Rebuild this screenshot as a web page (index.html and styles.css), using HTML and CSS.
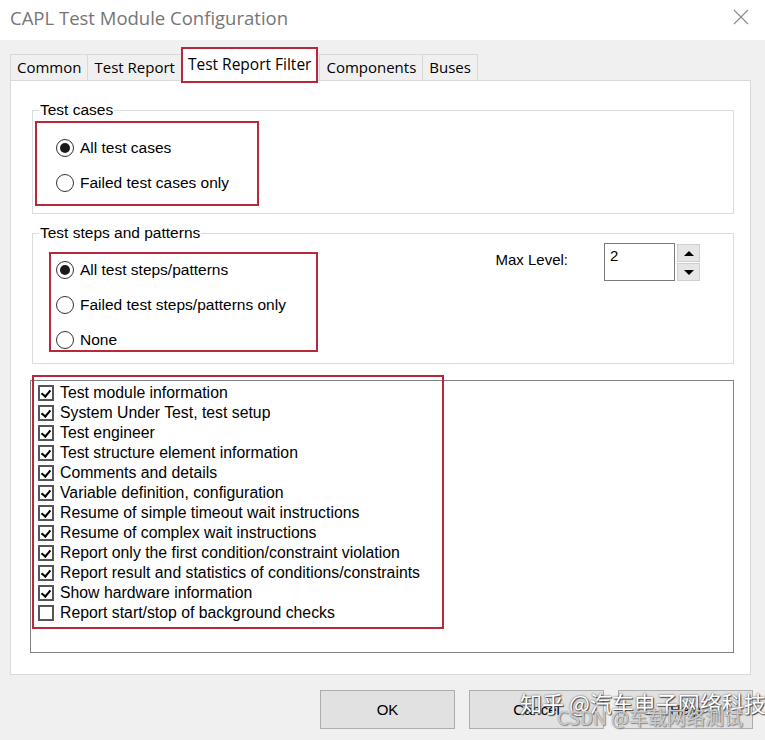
FILE: index.html
```html
<!DOCTYPE html>
<html lang="en">
  <head>
    <meta charset="UTF-8" />
    <title>CAPL Test Module Configuration</title>
    <link rel="stylesheet" href="styles.css">
  </head>
  <body>
    <div class="dialog">
      <div class="titlebar">
        <span class="title">CAPL Test Module Configuration</span>
        <svg class="close" width="16" height="16" viewBox="0 0 16 16">
          <path d="M1 1 L15 15 M15 1 L1 15" stroke="#8a8a8a" stroke-width="1.1" fill="none" />
        </svg>
      </div>

      <div class="client">
        <div class="tabs">
          <div class="tab">Common</div>
          <div class="tab">Test Report</div>
          <div class="tab active">Test Report Filter</div>
          <div class="tab">Components</div>
          <div class="tab">Buses</div>
        </div>

        <div class="panel">
          <fieldset class="group">
            <legend>Test cases</legend>
            <div class="mark mark-cases">
              <label class="radio"><span class="dot checked"></span>All test cases</label>
              <label class="radio"><span class="dot"></span>Failed test cases only</label>
            </div>
          </fieldset>

          <fieldset class="group group-steps">
            <legend>Test steps and patterns</legend>
            <div class="steps-row">
              <div class="mark mark-steps">
                <label class="radio"><span class="dot checked"></span>All test steps/patterns</label>
                <label class="radio"><span class="dot"></span>Failed test steps/patterns only</label>
                <label class="radio"><span class="dot"></span>None</label>
              </div>
              <div class="level">
                <span class="level-label">Max Level:</span>
                <div class="level-input">2</div>
                <div class="spin">
                  <div class="spin-btn"><span class="arrow up"></span></div>
                  <div class="spin-btn"><span class="arrow down"></span></div>
                </div>
              </div>
            </div>
          </fieldset>

          <div class="list-wrap">
            <div class="list">
              <div class="item"><span class="box on"></span>Test module information</div>
              <div class="item"><span class="box on"></span>System Under Test, test setup</div>
              <div class="item"><span class="box on"></span>Test engineer</div>
              <div class="item"><span class="box on"></span>Test structure element information</div>
              <div class="item"><span class="box on"></span>Comments and details</div>
              <div class="item"><span class="box on"></span>Variable definition, configuration</div>
              <div class="item"><span class="box on"></span>Resume of simple timeout wait instructions</div>
              <div class="item"><span class="box on"></span>Resume of complex wait instructions</div>
              <div class="item"><span class="box on"></span>Report only the first condition/constraint violation</div>
              <div class="item"><span class="box on"></span>Report result and statistics of conditions/constraints</div>
              <div class="item"><span class="box on"></span>Show hardware information</div>
              <div class="item"><span class="box"></span>Report start/stop of background checks</div>
            </div>
            <div class="mark-list"></div>
          </div>
        </div>

        <div class="buttons">
          <button class="btn">OK</button>
          <button class="btn">Cancel</button>
          <button class="btn">Help</button>
        </div>

        <div class="watermark">
          <span class="wm-top">知乎 @汽车电子网络科技</span>
          <span class="wm-bottom">CSDN @车载网络测试</span>
        </div>
      </div>
    </div>
  </body>
</html>
```

FILE: styles.css
```css
html, body {
  margin: 0;
  padding: 0;
}
body {
  width: 765px;
  height: 740px;
  overflow: hidden;
  background: #f0f0f0;
  font-family: 'Liberation Sans', Arial, sans-serif;
  color: #000;
}

.dialog {
  height: 740px;
  display: flex;
  flex-direction: column;
}

/* title bar */
.titlebar {
  height: 40px;
  background: #fff;
  display: flex;
  align-items: center;
  justify-content: space-between;
  padding: 0 16px 0 10px;
  flex: none;
}
.titlebar .title {
  font-family: 'Open Sans', 'Noto Sans', sans-serif;
  font-size: 18.5px;
  color: #767676;
  margin-top: -6px;
}
.titlebar .close {
  margin-top: -6px;
}

.client {
  position: relative;
  flex: 1;
  padding: 6px 12px 0 10px;
}

/* tabs */
.tabs {
  display: flex;
  align-items: flex-end;
  height: 34px;
  font-family: 'Open Sans', 'Noto Sans', sans-serif;
  font-size: 15px;
  position: relative;
  z-index: 2;
}
.tab {
  height: 26px;
  line-height: 25px;
  padding: 0 6px;
  box-sizing: border-box;
  border: 1px solid #d9d9d9;
  border-bottom: none;
  margin-right: -1px;
  background: #f0f0f0;
}
.tab.active {
  height: 36px;
  line-height: 31px;
  font-size: 15.5px;
  background: #fff;
  border: 2px solid #b8283a;
  margin: 0 1px -3px 0;
  padding: 0 5px;
}

.panel {
  background: #fff;
  border: 1px solid #d9d9d9;
  width: 741px;
  height: 595px;
  box-sizing: border-box;
  padding: 20px 16px 0 19px;
}

/* group boxes */
.group {
  margin: 0 0 0 2px;
  padding: 0 0 7px 0;
  border: 1px solid #dcdcdc;
  font-size: 15.5px;
}
.group legend {
  margin-left: 6px;
  padding: 0 1px;
  line-height: 18px;
}
.group-steps {
  margin-top: 10px;
  padding-bottom: 11px;
}

.mark {
  border: 2px solid #b8283a;
  display: flex;
  flex-direction: column;
}
.mark-cases {
  width: 224px;
  box-sizing: border-box;
  margin: 2px 0 0 2px;
  padding: 15px 0 11px 19px;
  gap: 15px;
}
.mark-steps {
  width: 269px;
  box-sizing: border-box;
  margin: 10px 0 0 16px;
  padding: 6px 0 0 5px;
  gap: 15px;
}

.radio {
  display: flex;
  align-items: center;
  height: 20px;
  gap: 6px;
}
.dot {
  width: 18px;
  height: 18px;
  border: 1px solid #333;
  border-radius: 50%;
  box-sizing: border-box;
  display: flex;
  align-items: center;
  justify-content: center;
  background: #fff;
}
.dot.checked::after {
  content: '';
  width: 10px;
  height: 10px;
  border-radius: 50%;
  background: #1a1a1a;
}

.steps-row {
  display: flex;
  justify-content: space-between;
  align-items: flex-start;
}
.level {
  display: flex;
  align-items: flex-start;
  margin: 1px 33px 0 0;
}
.level-label {
  margin: 8px 36px 0 0;
  font-size: 15px;
}
.level-input {
  width: 71px;
  height: 38px;
  box-sizing: border-box;
  border: 1px solid #7a7a7a;
  padding: 3px 0 0 5px;
  font-size: 15px;
}
.spin {
  margin-left: 2px;
  display: flex;
  flex-direction: column;
  gap: 1px;
  margin-top: 1px;
}
.spin-btn {
  width: 23px;
  height: 18px;
  box-sizing: border-box;
  background: #e6e6e6;
  border: 1px solid #cfcfcf;
  display: flex;
  align-items: center;
  justify-content: center;
}
.arrow {
  width: 0;
  height: 0;
  border-left: 5px solid transparent;
  border-right: 5px solid transparent;
}
.arrow.up {
  border-bottom: 5px solid #000;
}
.arrow.down {
  border-top: 5px solid #000;
}

/* list of report items */
.list-wrap {
  position: relative;
  margin-top: 16px;
}
.list {
  height: 273px;
  box-sizing: border-box;
  border: 1px solid #828282;
  padding: 2px 0 0 7px;
  font-size: 15.8px;
}
.item {
  display: flex;
  align-items: center;
  height: 20px;
  gap: 6px;
}
.box {
  width: 16px;
  height: 16px;
  box-sizing: border-box;
  border: 2px solid #555;
  background: #fff;
  position: relative;
}
.box.on::after {
  content: '';
  position: absolute;
  left: 3px;
  top: 1px;
  width: 4px;
  height: 7px;
  border: solid #000;
  border-width: 0 2.5px 2.5px 0;
  transform: rotate(40deg);
}
.mark-list {
  position: absolute;
  left: 2px;
  top: -5px;
  width: 412px;
  height: 254px;
  box-sizing: border-box;
  border: 2px solid #b8283a;
  pointer-events: none;
}

/* dialog buttons */
.buttons {
  display: flex;
  justify-content: flex-end;
  gap: 14px;
  margin-top: 15px;
}
.btn {
  width: 135px;
  height: 39px;
  background: #e1e1e1;
  border: 1px solid #adadad;
  font-family: 'Liberation Sans', Arial, sans-serif;
  font-size: 15px;
  color: #000;
  padding: 0;
}

.watermark {
  position: absolute;
  left: 520px;
  top: 646px;
  width: 240px;
  height: 50px;
  font-family: 'Noto Sans CJK SC', sans-serif;
  pointer-events: none;
}
.wm-top {
  position: absolute;
  left: 0;
  top: 0;
  font-size: 22px;
  color: #fff;
  text-shadow: 0 0 2px #444, 1px 1px 1px #444;
  white-space: nowrap;
}
.wm-bottom {
  position: absolute;
  left: 37px;
  top: 17px;
  font-size: 19px;
  color: rgba(240, 240, 240, 0.7);
  text-shadow: 0 0 1px #777, 1px 1px 1px #888;
  white-space: nowrap;
}
```
